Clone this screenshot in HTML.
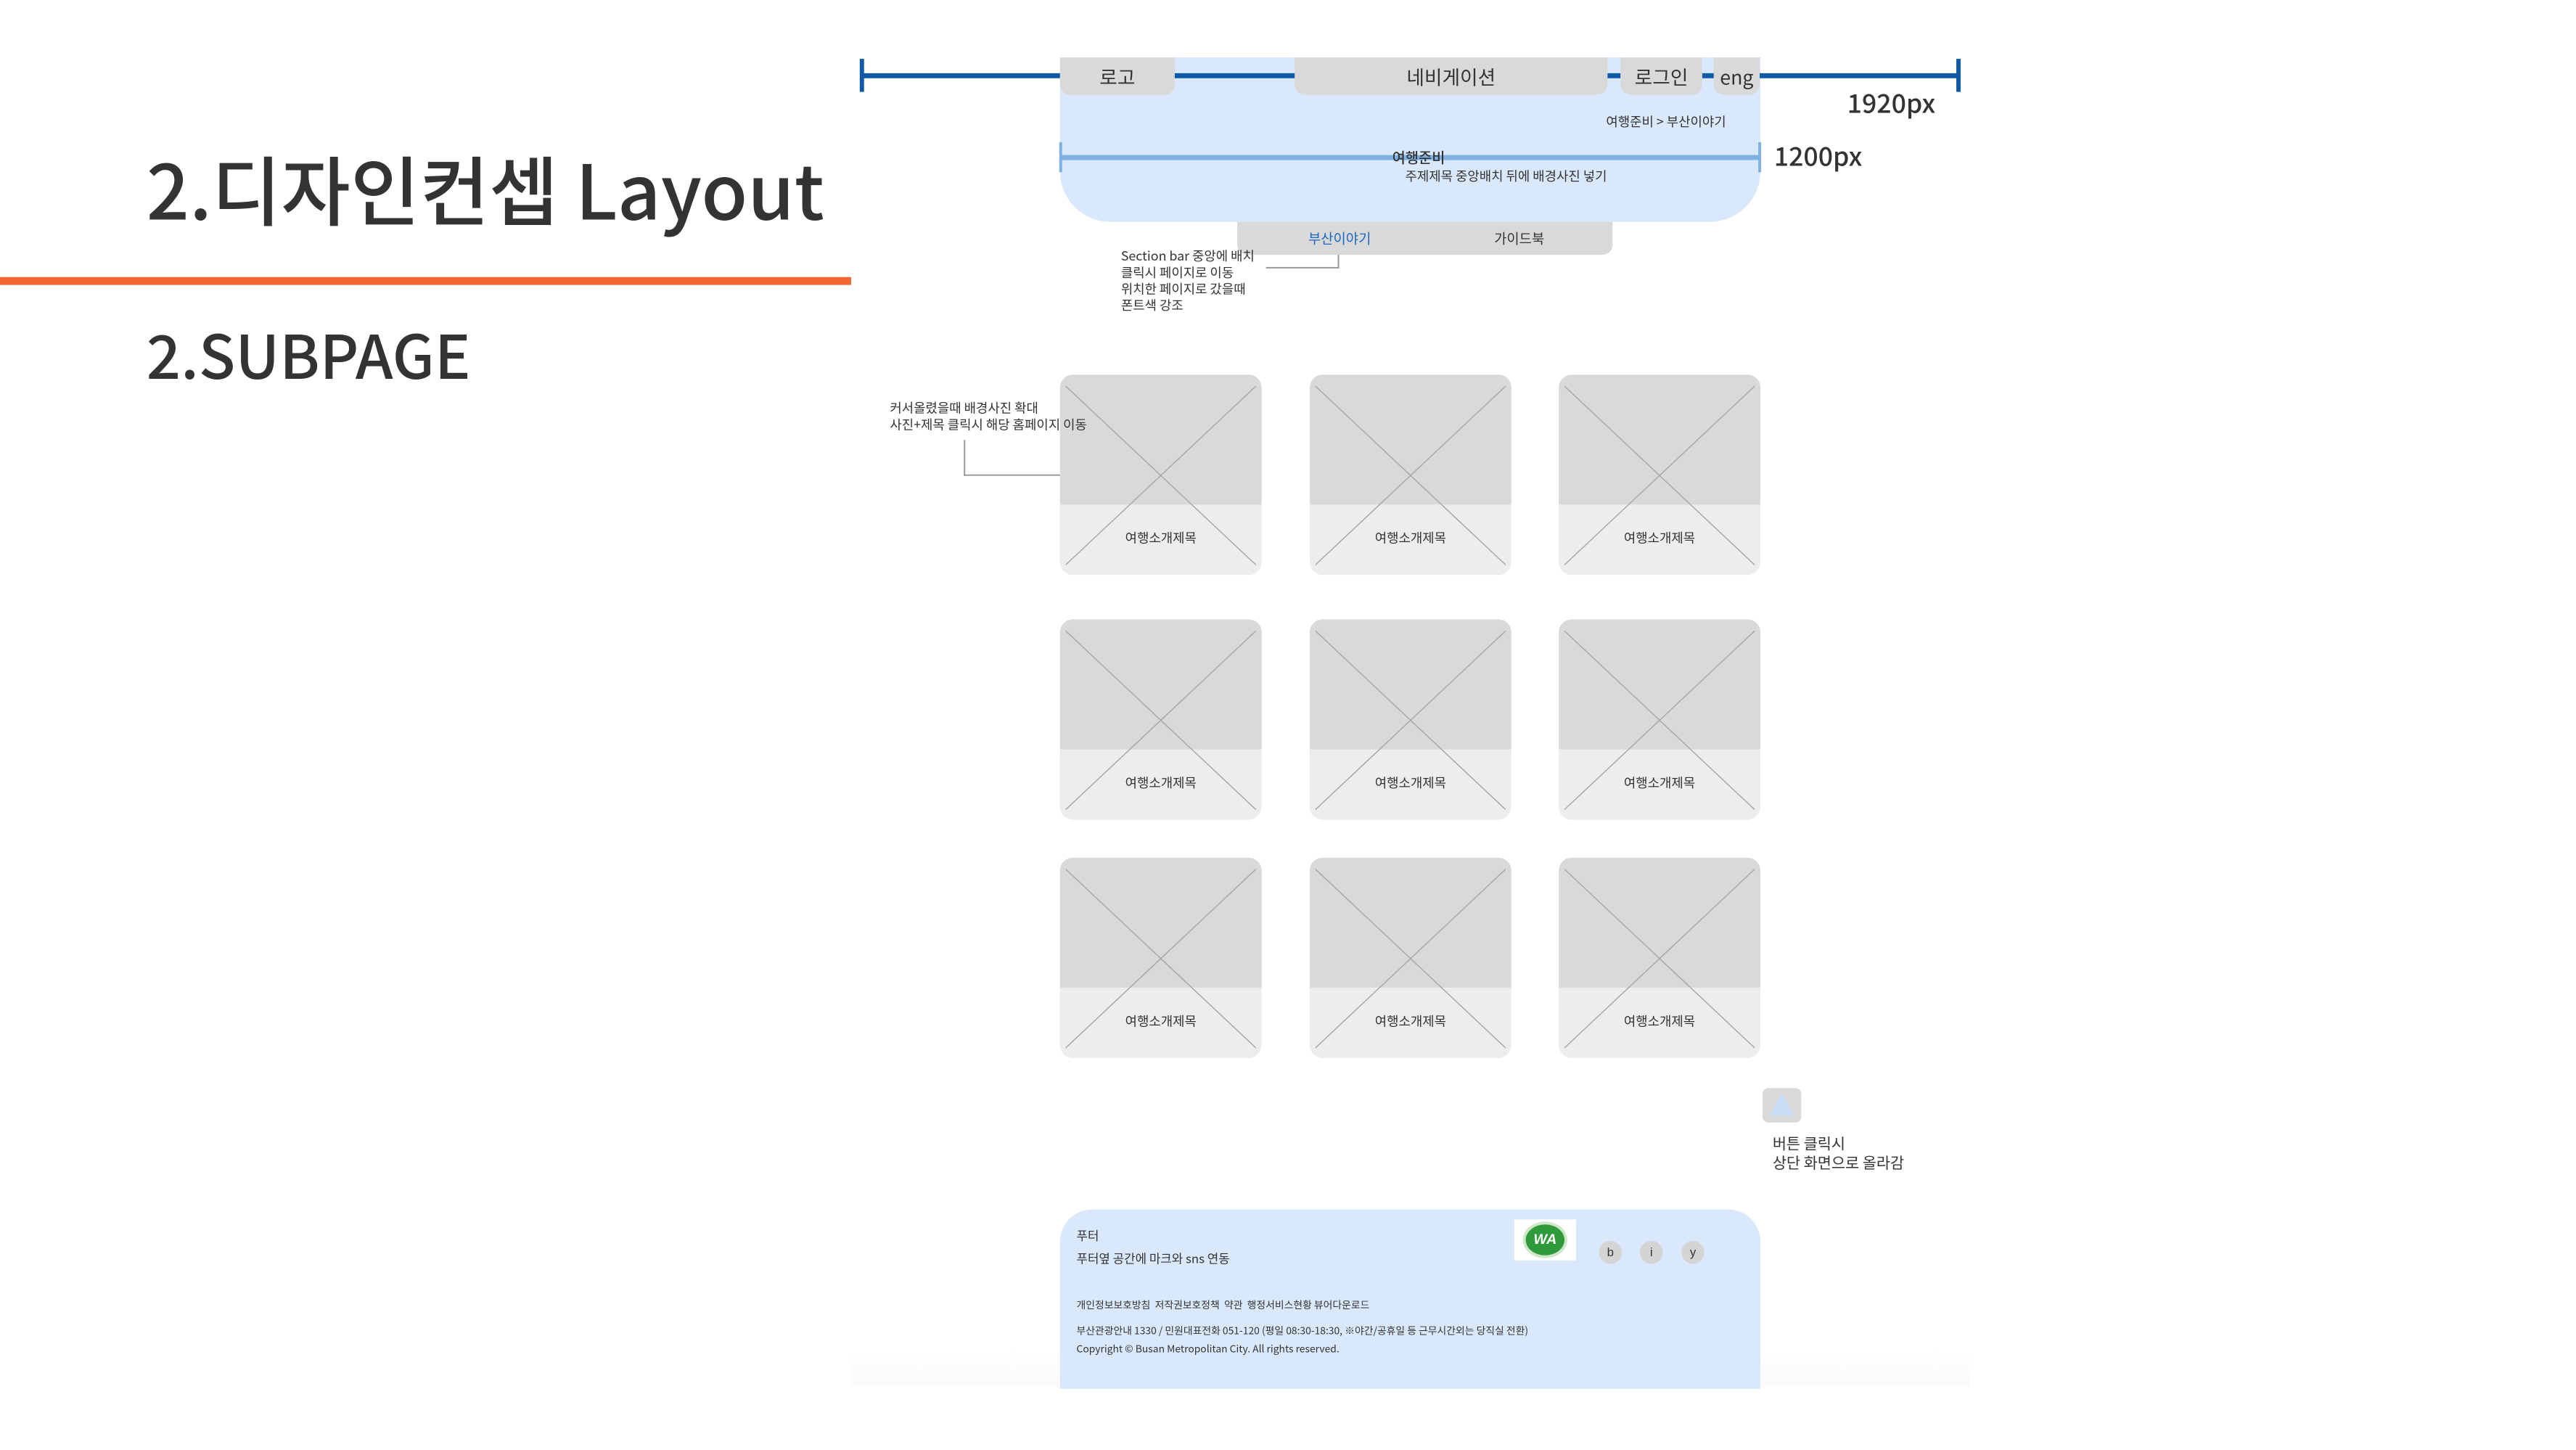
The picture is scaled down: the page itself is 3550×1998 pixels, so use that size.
<!DOCTYPE html>
<html><head><meta charset="utf-8">
<style>
*{margin:0;padding:0;box-sizing:border-box}
body{width:3550px;height:1998px;background:#fff;position:relative;overflow:hidden;font-family:"Liberation Sans","Noto Sans CJK KR",sans-serif;color:#333}
#w{position:absolute;left:0;top:0;width:3550px;height:2020px;transform:scale(0.989);transform-origin:0 0}
.a{position:absolute;white-space:nowrap}
.k{font-family:"Noto Sans CJK KR","Liberation Sans",sans-serif}
.box{position:absolute;background:#d9d9d9;border-radius:0 0 14px 14px;display:flex;align-items:center;justify-content:center;font-size:27px;color:#333}
.card{position:absolute;width:281px;height:279px;border-radius:18px;overflow:hidden;background:#ededed}
.card .top{position:absolute;left:0;top:0;width:100%;height:181px;background:#d9d9d9}
.card svg{position:absolute;left:0;top:0}
.card span{position:absolute;left:0;width:100%;top:214px;text-align:center;font-size:18px;color:#333}
.t{font-size:18px;line-height:23px;color:#333}
</style></head><body><div id="w">
<div class="a k" style="left:204px;top:186px;font-size:105px;font-weight:500;line-height:150px;color:#333">2.디자인컨셉 Layout</div>
<div class="a" style="left:0;top:386px;width:1186px;height:11px;background:#f26633"></div>
<div class="a k" style="left:204px;top:438px;font-size:84px;font-weight:500;line-height:110px">2.SUBPAGE</div>

<div class="a" style="left:1477px;top:80px;width:976px;height:229px;background:#dae8fb;border-radius:0 0 70px 70px"></div>
<div class="a" style="left:1200px;top:102px;width:1530px;height:7px;background:#0f5aa8"></div>
<div class="a" style="left:1198px;top:82px;width:6px;height:46px;background:#0f5aa8"></div>
<div class="a" style="left:2726px;top:82px;width:6px;height:46px;background:#0f5aa8"></div>
<div class="box k" style="left:1477px;top:80px;width:160px;height:52px">로고</div>
<div class="box k" style="left:1804px;top:80px;width:436px;height:52px">네비게이션</div>
<div class="box k" style="left:2258px;top:80px;width:114px;height:52px">로그인</div>
<div class="box k" style="left:2388px;top:80px;width:64px;height:52px">eng</div>
<div class="a k" style="left:2574px;top:116px;font-size:36px;font-weight:500">1920px</div>
<div class="a k" style="left:2238px;top:156px;font-size:18px">여행준비 &gt; 부산이야기</div>
<div class="a" style="left:1477px;top:216px;width:976px;height:7px;background:#7fb1e2"></div>
<div class="a" style="left:1476px;top:198px;width:4px;height:42px;background:#7fb1e2"></div>
<div class="a" style="left:2450px;top:198px;width:4px;height:42px;background:#7fb1e2"></div>
<div class="a k" style="left:1940px;top:204px;font-size:20px;font-weight:500">여행준비</div>
<div class="a k" style="left:1958px;top:232px;font-size:18px">주제제목 중앙배치 뒤에 배경사진 넣기</div>
<div class="a k" style="left:2472px;top:190px;font-size:36px;font-weight:500">1200px</div>
<div class="a" style="left:1724px;top:309px;width:523px;height:46px;background:#d9d9d9;border-radius:0 0 14px 14px"></div>
<div class="a k" style="left:1823px;top:318px;font-size:19px;color:#1a67c0">부산이야기</div>
<div class="a k" style="left:2082px;top:318px;font-size:19px">가이드북</div>
<div class="a" style="left:1864px;top:355px;width:2px;height:19px;background:#999"></div>
<div class="a" style="left:1764px;top:372px;width:102px;height:2px;background:#999"></div>
<div class="a k t" style="left:1562px;top:345px">Section bar 중앙에 배치<br>클릭시 페이지로 이동<br>위치한 페이지로 갔을때<br>폰트색 강조</div>

<div class="card k" style="left:1477px;top:522px"><div class="top"></div><svg width="281" height="279"><path d="M8 16L273 265M273 16L8 265" stroke="#a8a8a8" stroke-width="1.5" fill="none"/></svg><span>여행소개제목</span></div>
<div class="card k" style="left:1825px;top:522px"><div class="top"></div><svg width="281" height="279"><path d="M8 16L273 265M273 16L8 265" stroke="#a8a8a8" stroke-width="1.5" fill="none"/></svg><span>여행소개제목</span></div>
<div class="card k" style="left:2172px;top:522px"><div class="top"></div><svg width="281" height="279"><path d="M8 16L273 265M273 16L8 265" stroke="#a8a8a8" stroke-width="1.5" fill="none"/></svg><span>여행소개제목</span></div>
<div class="card k" style="left:1477px;top:863px"><div class="top"></div><svg width="281" height="279"><path d="M8 16L273 265M273 16L8 265" stroke="#a8a8a8" stroke-width="1.5" fill="none"/></svg><span>여행소개제목</span></div>
<div class="card k" style="left:1825px;top:863px"><div class="top"></div><svg width="281" height="279"><path d="M8 16L273 265M273 16L8 265" stroke="#a8a8a8" stroke-width="1.5" fill="none"/></svg><span>여행소개제목</span></div>
<div class="card k" style="left:2172px;top:863px"><div class="top"></div><svg width="281" height="279"><path d="M8 16L273 265M273 16L8 265" stroke="#a8a8a8" stroke-width="1.5" fill="none"/></svg><span>여행소개제목</span></div>
<div class="card k" style="left:1477px;top:1195px"><div class="top"></div><svg width="281" height="279"><path d="M8 16L273 265M273 16L8 265" stroke="#a8a8a8" stroke-width="1.5" fill="none"/></svg><span>여행소개제목</span></div>
<div class="card k" style="left:1825px;top:1195px"><div class="top"></div><svg width="281" height="279"><path d="M8 16L273 265M273 16L8 265" stroke="#a8a8a8" stroke-width="1.5" fill="none"/></svg><span>여행소개제목</span></div>
<div class="card k" style="left:2172px;top:1195px"><div class="top"></div><svg width="281" height="279"><path d="M8 16L273 265M273 16L8 265" stroke="#a8a8a8" stroke-width="1.5" fill="none"/></svg><span>여행소개제목</span></div>

<div class="a k t" style="left:1240px;top:557px;z-index:5">커서올렸을때 배경사진 확대<br>사진+제목 클릭시 해당 홈페이지 이동</div>
<div class="a" style="left:1343px;top:613px;width:2px;height:50px;background:#999"></div>
<div class="a" style="left:1343px;top:661px;width:134px;height:2px;background:#999"></div>

<div class="a" style="left:2456px;top:1516px;width:54px;height:48px;background:#d9d9d9;border-radius:8px"></div>
<svg class="a" style="left:2456px;top:1516px" width="54" height="48"><path d="M27 12L40 36H14Z" fill="#c9ddf7" stroke="#c9ddf7" stroke-width="5" stroke-linejoin="round"/></svg>
<div class="a k" style="left:2470px;top:1580px;font-size:21px;line-height:27px">버튼 클릭시<br>상단 화면으로 올라감</div>

<div class="a" style="left:1186px;top:1880px;width:1558px;height:52px;background:linear-gradient(#fff,#fafafa)"></div>
<div class="a" style="left:1477px;top:1685px;width:976px;height:250px;background:#dae8fb;border-radius:45px 45px 0 0"></div>
<div class="a k" style="left:1500px;top:1708px;font-size:17px">푸터</div>
<div class="a k" style="left:1500px;top:1740px;font-size:17px">푸터옆 공간에 마크와 sns 연동</div>
<div class="a" style="left:2110px;top:1699px;width:86px;height:57px;background:#fff"></div>
<div class="a" style="left:2122px;top:1702px;width:62px;height:51px;border-radius:50%;background:#2f9a3c;border:4px solid #cfe6c8;color:#fff;font-weight:bold;font-style:italic;font-size:20px;display:flex;align-items:center;justify-content:center">WA</div>
<div class="a" style="left:2228px;top:1729px;width:32px;height:32px;border-radius:50%;background:#d4d4d4;font-size:17px;display:flex;align-items:center;justify-content:center">b</div>
<div class="a" style="left:2285px;top:1729px;width:32px;height:32px;border-radius:50%;background:#d4d4d4;font-size:17px;display:flex;align-items:center;justify-content:center">i</div>
<div class="a" style="left:2343px;top:1729px;width:32px;height:32px;border-radius:50%;background:#d4d4d4;font-size:17px;display:flex;align-items:center;justify-content:center">y</div>
<div class="a k" style="left:1500px;top:1808px;font-size:14px">개인정보보호방침&nbsp; 저작권보호정책&nbsp; 약관&nbsp; 행정서비스현황 뷰어다운로드</div>
<div class="a k" style="left:1500px;top:1844px;font-size:14px">부산관광안내 1330 / 민원대표전화 051-120 (평일 08:30-18:30, ※야간/공휴일 등 근무시간외는 당직실 전환)</div>
<div class="a k" style="left:1500px;top:1869px;font-size:14px">Copyright © Busan Metropolitan City. All rights reserved.</div>
</div></body></html>
